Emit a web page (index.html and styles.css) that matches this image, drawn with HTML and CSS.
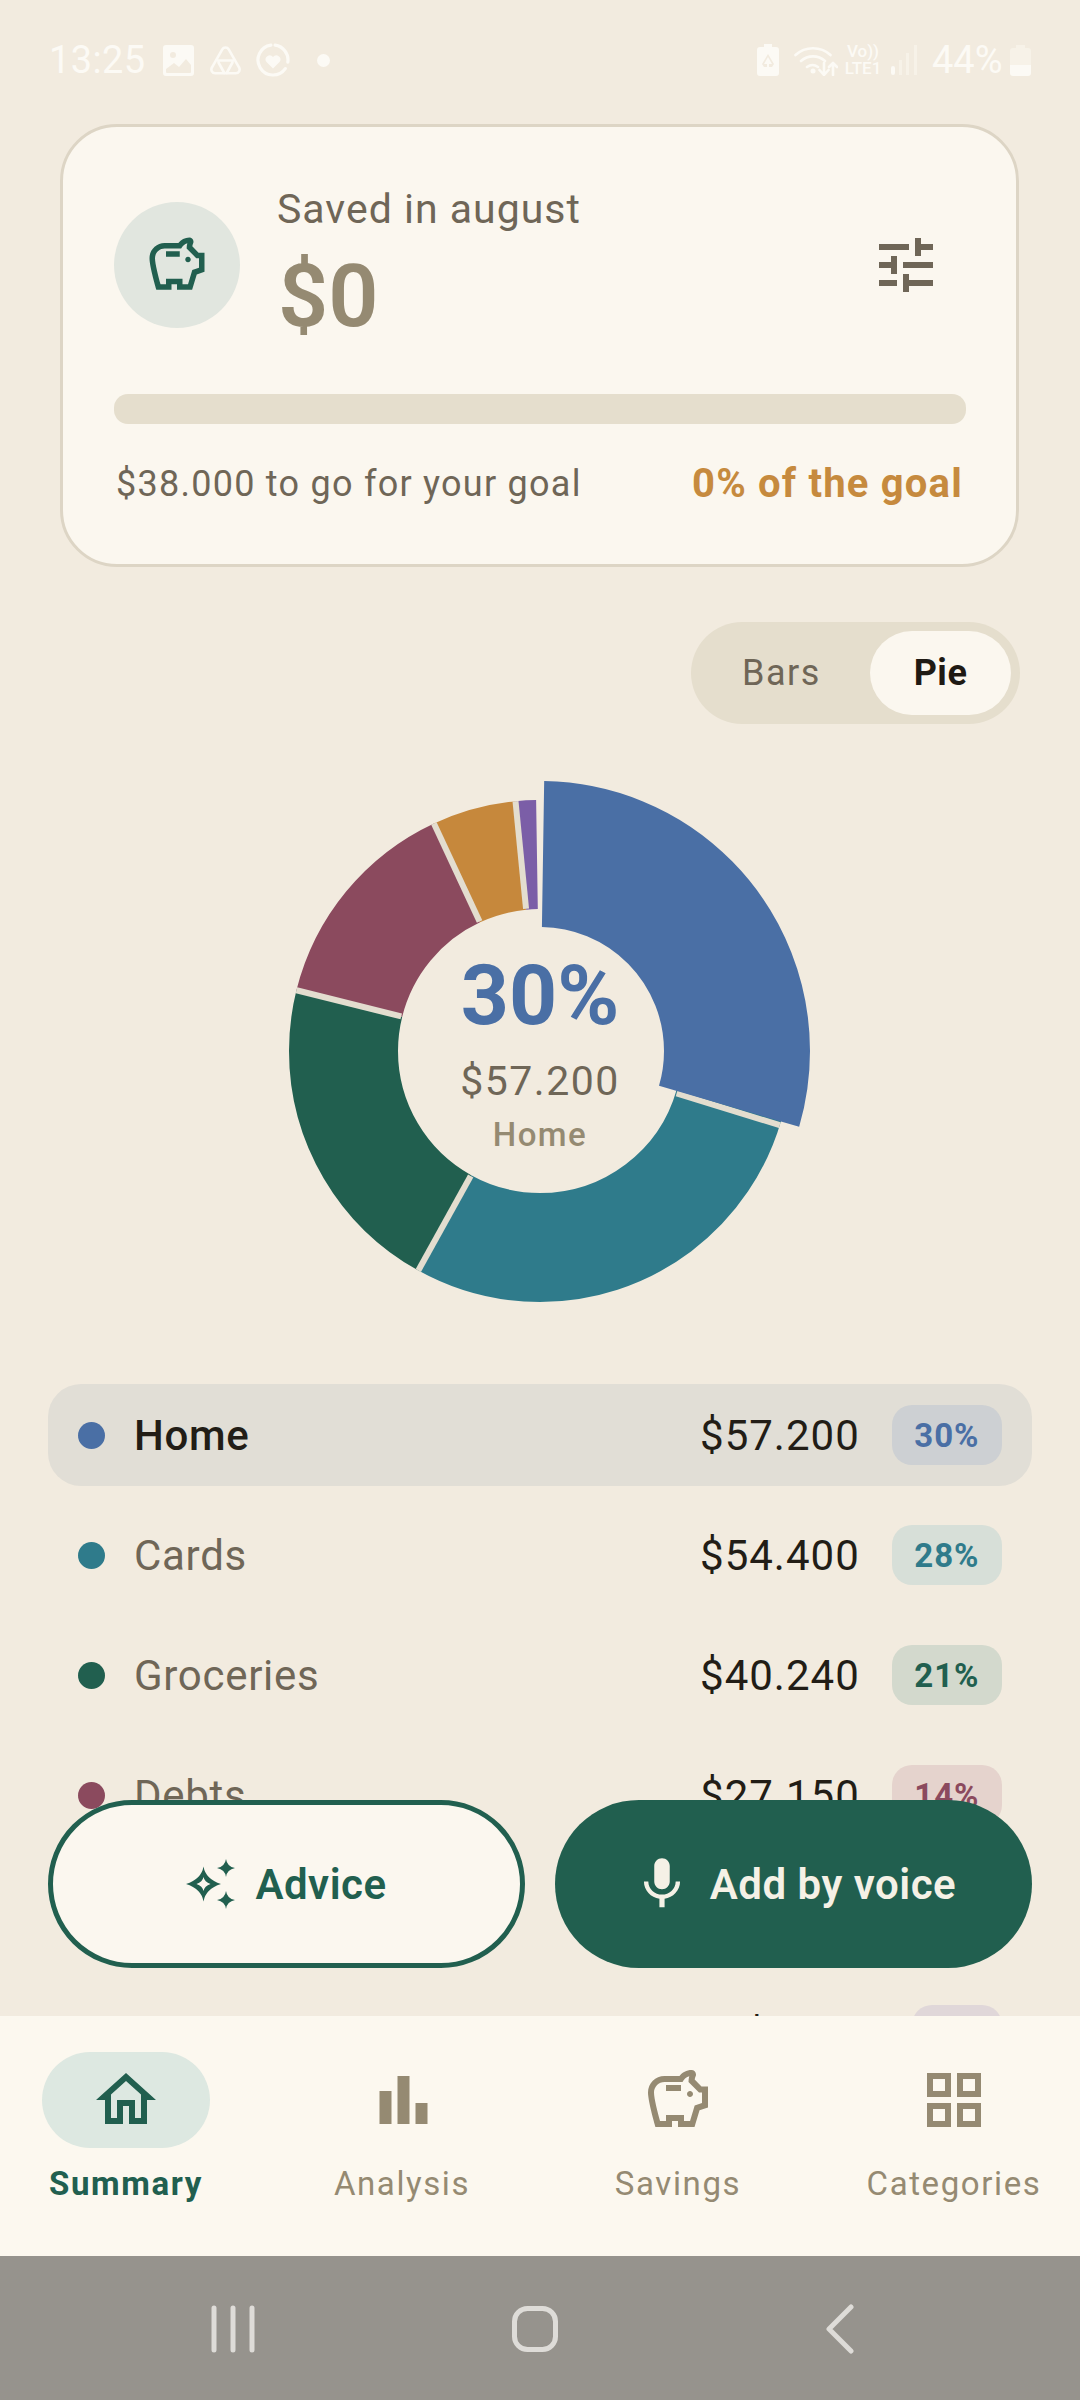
FILE: index.html
```html
<!DOCTYPE html>
<html lang="en">
<head>
<meta charset="utf-8">
<title>Summary</title>
<link rel="stylesheet" href="styles.css">
</head>
<body>
<div class="screen">
  <header class="status">
    <span class="status-time">13:25</span>
    <svg class="si si-img" viewBox="0 0 31 31"><path fill-rule="evenodd" d="M3 0h25a3 3 0 0 1 3 3v25a3 3 0 0 1-3 3H3a3 3 0 0 1-3-3V3a3 3 0 0 1 3-3zM10 7a3 3 0 1 0 0 6 3 3 0 0 0 0-6zM3 24v3a1 1 0 0 0 1 1h23a1 1 0 0 0 1-1v-7l-5-6-7 8-5-4z"/></svg>
    <svg class="si si-tri" viewBox="0 0 31 29"><g class="si-line"><path d="M12.300 3.300a3.700 3.700 0 0 1 6.400 0l10.300 18a3.900 3.900 0 0 1-3.300 6H5.300a3.900 3.900 0 0 1-3.300-6z"/><path d="M8 14.500h15M8.500 16.500l5.800 10.500M22.500 16.500L16.700 27"/></g></svg>
    <svg class="si si-ring" viewBox="0 0 34 34"><g class="si-line si-line-ring"><path d="M19.100 2.150A15 15 0 0 1 31.850 19.090M29.300 25.600A15 15 0 1 1 14.900 2.150"/></g><path d="M17 25.500l-6.500-6.500a4 4 0 0 1 6.500-5 4 4 0 0 1 6.500 5z"/></svg>
    <span class="status-dot"></span>
    <svg class="si si-save" viewBox="0 0 22 32"><path fill-rule="evenodd" d="M7 0h8v3h4a3 3 0 0 1 3 3v23a3 3 0 0 1-3 3H3a3 3 0 0 1-3-3V6a3 3 0 0 1 3-3h4zM11 10l-6 10 2 3h3v-3H7l4-7 4 7h-3v3h3l2-3z"/></svg>
    <svg class="si si-wifi" viewBox="0 0 44 32"><g class="si-line"><path d="M1.500 11a26 26 0 0 1 35 0M7 17a18 18 0 0 1 24 0M13 23a9.500 9.500 0 0 1 11 0"/><path d="M30 19v12M25.500 26l4.500 5 4.500-5M39 31V19M35 23l4-4 4 4"/></g><circle cx="19" cy="27" r="2.500"/></svg>
    <div class="volte"><span>Vo))</span><span>LTE1</span></div>
    <svg class="si si-signal" viewBox="0 0 27 30"><rect x="0" y="21" width="4" height="9" rx="2"/><rect class="faint" x="8" y="15" width="3" height="15"/><rect class="faint" x="15" y="8" width="3" height="22"/><rect class="faint" x="23" y="0" width="3" height="30"/></svg>
    <span class="status-pct">44%</span>
    <svg class="si si-batt" viewBox="0 0 21 31"><path class="faint" d="M6 0h9v3h3a3 3 0 0 1 3 3v14H0V6a3 3 0 0 1 3-3h3z"/><path d="M0 20h21v8a3 3 0 0 1-3 3H3a3 3 0 0 1-3-3z"/></svg>
  </header>

  <main class="content">
    <section class="card">
      <div class="card-head">
        <div class="card-avatar">
          <svg class="icon-pig" viewBox="0 0 24 24"><path d="M15 10c0-.55.45-1 1-1s1 .45 1 1-.45 1-1 1-1-.45-1-1zM8 9h5V7H8v2zm14-1.500v6.970l-2.820.94L17.500 21H12v-2h-2v2H4.500S2 12.540 2 9.500 4.460 4 7.500 4h5c.91-1.210 2.360-2 4-2 .83 0 1.500.67 1.500 1.500 0 .21-.04.4-.12.58-.14.32-.26.69-.32 1.090L19.830 7.500H22zm-2 2h-1l-3.500-3.500c0-.65.09-1.290.26-1.910-.97.25-1.760.97-2.260 1.910h-6C5.570 6 4 7.570 4 9.500c0 1.880 1.220 6.650 2.010 9.500H8v-2h6v2h2.010l1.550-5.150L20 13.030V9.500z"/></svg>
        </div>
        <div class="card-title">
          <div class="card-label">Saved in august</div>
          <div class="card-amount">$0</div>
        </div>
        <svg class="icon-tune" viewBox="0 0 24 24"><path d="M3 17v2h6v-2H3zM3 5v2h10V5H3zm10 16v-2h8v-2h-8v-2h-2v6h2zM7 9v2H3v2h4v2h2V9H7zm14 4v-2H11v2h10zm-6-4h2V7h4V5h-4V3h-2v6z"/></svg>
      </div>
      <div class="progress"></div>
      <div class="card-foot">
        <span class="foot-left">$38.000 to go for your goal</span>
        <span class="foot-right">0% of the goal</span>
      </div>
    </section>

    <div class="toggle">
      <span class="seg seg-bars">Bars</span>
      <span class="seg seg-pie">Pie</span>
    </div>

    <div class="donut">
      <svg class="donut-svg" viewBox="0 0 560 560">
        <g transform="rotate(-90 280 280)">
          <circle class="slice teal" cx="280" cy="280" r="196.500" pathLength="360" stroke-dasharray="103 360" stroke-dashoffset="-106"/>
          <circle class="slice green" cx="280" cy="280" r="196.500" pathLength="360" stroke-dasharray="75 360" stroke-dashoffset="-209"/>
          <circle class="slice maroon" cx="280" cy="280" r="196.500" pathLength="360" stroke-dasharray="51 360" stroke-dashoffset="-284"/>
          <circle class="slice orange" cx="280" cy="280" r="196.500" pathLength="360" stroke-dasharray="19.400 360" stroke-dashoffset="-335"/>
          <circle class="slice purple" cx="280" cy="280" r="196.500" pathLength="360" stroke-dasharray="4.700 360" stroke-dashoffset="-354.400"/>
        </g>
        <line class="gap" x1="280" y1="137" x2="280" y2="29" transform="rotate(107.200 280 280)"/>
        <line class="gap" x1="280" y1="137" x2="280" y2="29" transform="rotate(209 280 280)"/>
        <line class="gap" x1="280" y1="137" x2="280" y2="29" transform="rotate(284 280 280)"/>
        <line class="gap" x1="280" y1="137" x2="280" y2="29" transform="rotate(335 280 280)"/>
        <line class="gap" x1="280" y1="137" x2="280" y2="29" transform="rotate(354.400 280 280)"/>
        <g transform="rotate(-90 280 280)">
          <circle class="slice-active" cx="280" cy="280" r="197" pathLength="360" stroke-dasharray="105.400 360" stroke-dashoffset="-0.900"/>
        </g>
      </svg>
      <div class="donut-center">
        <div class="donut-pct">30%</div>
        <div class="donut-amt">$57.200</div>
        <div class="donut-name">Home</div>
      </div>
    </div>

    <ul class="legend">
      <li class="row row-active">
        <span class="dot bg-blue"></span><span class="name">Home</span><span class="amt">$57.200</span><span class="badge badge-blue">30%</span>
      </li>
      <li class="row">
        <span class="dot bg-teal"></span><span class="name">Cards</span><span class="amt">$54.400</span><span class="badge badge-teal">28%</span>
      </li>
      <li class="row">
        <span class="dot bg-green"></span><span class="name">Groceries</span><span class="amt">$40.240</span><span class="badge badge-green">21%</span>
      </li>
      <li class="row">
        <span class="dot bg-maroon"></span><span class="name">Debts</span><span class="amt">$27.150</span><span class="badge badge-maroon">14%</span>
      </li>
      <li class="row"></li>
      <li class="row">
        <span class="amt">$2.860</span><span class="badge badge-purple">2%</span>
      </li>
    </ul>

    <div class="actions">
      <button class="btn btn-outline">
        <svg class="icon-spark" viewBox="0 0 50 50"><path fill-rule="evenodd" d="M17.500 7.500Q19.500 20 35 25 19.500 30 17.500 42.500 15.500 30 0 25 15.500 20 17.500 7.500zM17.500 18Q16.500 23 10.500 25 16.500 27 17.500 32 18.500 27 24.500 25 18.500 23 17.500 18z"/><path d="M40 0Q41 7.500 49 9 41 10.500 40 18 39 10.500 31 9 39 7.500 40 0zM40 32Q41 39.500 49 41 41 42.500 40 50 39 42.500 31 41 39 39.500 40 32z"/></svg>
        <span>Advice</span>
      </button>
      <button class="btn btn-solid">
        <svg class="icon-mic" viewBox="0 0 24 24"><path d="M12 14c1.660 0 2.990-1.340 2.990-3L15 5c0-1.660-1.340-3-3-3S9 3.340 9 5v6c0 1.660 1.340 3 3 3zm5.300-3c0 3-2.540 5.100-5.300 5.100S6.700 14 6.700 11H5c0 3.410 2.720 6.230 6 6.720V21h2v-3.280c3.280-.48 6-3.300 6-6.720h-1.700z"/></svg>
        <span>Add by voice</span>
      </button>
    </div>
  </main>

  <nav class="tabs">
    <div class="tab tab-active">
      <div class="tab-icon"><svg viewBox="0 0 24 24"><path d="M12 5.690l5 4.500V18h-2v-6H9v6H7v-7.810l5-4.500M12 3L2 12h3v8h6v-6h2v6h6v-8h3L12 3z"/></svg></div>
      <span class="tab-label">Summary</span>
    </div>
    <div class="tab">
      <div class="tab-icon"><svg viewBox="0 0 24 24"><path d="M4.500 9h4v11h-4zM10.500 4h4v16h-4zM16.500 13h4v7h-4z"/></svg></div>
      <span class="tab-label">Analysis</span>
    </div>
    <div class="tab">
      <div class="tab-icon"><svg viewBox="0 0 24 24"><path d="M15 10c0-.55.45-1 1-1s1 .45 1 1-.45 1-1 1-1-.45-1-1zM8 9h5V7H8v2zm14-1.500v6.970l-2.820.94L17.500 21H12v-2h-2v2H4.500S2 12.540 2 9.500 4.460 4 7.500 4h5c.91-1.210 2.360-2 4-2 .83 0 1.500.67 1.500 1.500 0 .21-.04.4-.12.58-.14.32-.26.69-.32 1.090L19.830 7.500H22zm-2 2h-1l-3.500-3.500c0-.65.09-1.290.26-1.910-.97.25-1.760.97-2.260 1.910h-6C5.570 6 4 7.570 4 9.500c0 1.880 1.220 6.650 2.010 9.500H8v-2h6v2h2.010l1.550-5.150L20 13.030V9.500z"/></svg></div>
      <span class="tab-label">Savings</span>
    </div>
    <div class="tab">
      <div class="tab-icon"><svg viewBox="0 0 24 24"><path d="M3 3v8h8V3H3zm6 6H5V5h4v4zm-6 4v8h8v-8H3zm6 6H5v-4h4v4zm4-16v8h8V3h-8zm6 6h-4V5h4v4zm-6 4v8h8v-8h-8zm6 6h-4v-4h4v4z"/></svg></div>
      <span class="tab-label">Categories</span>
    </div>
  </nav>

  <footer class="sysnav">
    <svg class="sys sys-recent" viewBox="0 0 44 48"><path d="M3 3v42M22 3v42M41 3v42"/></svg>
    <svg class="sys sys-home" viewBox="0 0 46 46"><rect x="2.500" y="2.500" width="41" height="41" rx="13"/></svg>
    <svg class="sys sys-back" viewBox="0 0 28 50"><path d="M25 3L3 25l22 22"/></svg>
  </footer>
</div>
</body>
</html>
```

FILE: styles.css
```css
* { box-sizing: border-box; }

html, body {
  margin: 0;
  padding: 0;
}

body {
  width: 1080px;
  height: 2400px;
  overflow: hidden;
  font-family: Roboto, "Liberation Sans", sans-serif;
}

.screen {
  width: 1080px;
  height: 2400px;
  display: flex;
  flex-direction: column;
  background: #f2ebdf;
  color: #221d16;
}

/* status bar */
.status {
  height: 124px;
  flex: none;
  padding: 0 0 4px 49px;
  display: flex;
  align-items: center;
  color: #fcfaf5;
}

.status-time,
.status-pct {
  font-size: 38px;
  line-height: 44px;
}

.status-time { letter-spacing: 0.4px; }

.si {
  flex: none;
  fill: #fcfaf5;
}

.si-line {
  fill: none;
  stroke: #fcfaf5;
  stroke-width: 2.6;
  stroke-linecap: round;
  stroke-linejoin: round;
}

.si-line-ring { stroke-width: 3.2; }

.faint { fill: #f7f2e8; }

.si-img { width: 31px; height: 31px; margin-left: 17px; }
.si-tri { width: 31px; height: 29px; margin-left: 16px; }
.si-ring { width: 34px; height: 34px; margin-left: 15px; }

.status-dot {
  width: 13px;
  height: 13px;
  border-radius: 50%;
  background: #fcfaf5;
  margin-left: 27px;
  margin-right: auto;
}

.si-save { width: 22px; height: 32px; }
.si-wifi { width: 44px; height: 32px; margin-left: 15px; }

.volte {
  display: flex;
  flex-direction: column;
  align-items: center;
  margin-left: 6px;
  width: 38px;
  font-size: 17px;
  line-height: 17px;
  font-weight: 500;
}

.si-signal { width: 27px; height: 30px; margin-left: 9px; }
.status-pct { margin-left: 14px; width: 74px; }
.si-batt { width: 21px; height: 31px; margin-right: 49px; margin-left: 4px; }

/* content */
.content {
  flex: 1;
  min-height: 0;
  position: relative;
  overflow: hidden;
  display: flex;
  flex-direction: column;
}

.card {
  margin: 0 61px 0 60px;
  height: 443px;
  flex: none;
  border: 3px solid #ddd5c5;
  border-radius: 57px;
  background: #fbf7ef;
  padding: 48px 50px 0 51px;
}

.card-head {
  height: 180px;
  display: flex;
  align-items: center;
}

.card-avatar {
  width: 126px;
  height: 126px;
  border-radius: 50%;
  background: #e1e6df;
  display: flex;
  align-items: center;
  justify-content: center;
  flex: none;
}

.icon-pig { width: 66px; height: 66px; fill: #215f4f; }

.card-title {
  margin-left: 37px;
  flex: 1;
}

.card-label {
  font-size: 41px;
  line-height: 48px;
  letter-spacing: 1px;
  color: #6f6657;
}

.card-amount {
  margin-top: 13px;
  font-size: 88px;
  line-height: 100px;
  font-weight: 600;
  color: #958a72;
  padding-left: 1px;
}

.icon-tune {
  width: 72px;
  height: 72px;
  fill: #6f6657;
  margin-right: 24px;
  flex: none;
}

.progress {
  margin-top: 39px;
  height: 30px;
  border-radius: 14px;
  background: #e5decd;
}

.card-foot {
  margin-top: 38px;
  display: flex;
  justify-content: space-between;
  align-items: center;
  line-height: 44px;
  padding: 0 3px 0 2px;
}

.foot-left {
  font-size: 36px;
  letter-spacing: 1.25px;
  color: #6f6657;
}

.foot-right {
  font-size: 40px;
  font-weight: 700;
  letter-spacing: 1.2px;
  color: #c68a3e;
}

/* toggle */
.toggle {
  margin: 55px 60px 0 auto;
  width: 329px;
  height: 102px;
  flex: none;
  padding: 9px;
  border-radius: 51px;
  background: #e5decd;
  display: flex;
}

.seg {
  display: flex;
  align-items: center;
  justify-content: center;
  font-size: 36px;
  border-radius: 42px;
}

.seg-bars {
  width: 170px;
  color: #6f6657;
  letter-spacing: 1.5px;
  padding-right: 7px;
}

.seg-pie {
  width: 141px;
  background: #fbf7ef;
  color: #1f1a14;
  font-weight: 700;
  letter-spacing: 0.5px;
}

/* donut */
.donut {
  margin: 47px auto 0;
  width: 560px;
  height: 560px;
  flex: none;
  position: relative;
}

.donut-svg {
  display: block;
  width: 560px;
  height: 560px;
}

.slice {
  fill: none;
  stroke-width: 109;
}

.teal { stroke: #2f7b8b; }
.green { stroke: #215f4f; }
.maroon { stroke: #8b4a5e; }
.orange { stroke: #c6883c; }
.purple { stroke: #7b5ea7; }

.gap {
  stroke: #e3ddcf;
  stroke-width: 6;
}

.slice-active {
  fill: none;
  stroke: #4a6fa5;
  stroke-width: 146;
}

.donut-center {
  position: absolute;
  inset: 0;
  padding-top: 183px;
  display: flex;
  flex-direction: column;
  align-items: center;
}

.donut-pct {
  font-size: 84px;
  line-height: 84px;
  font-weight: 700;
  color: #4a6fa5;
}

.donut-amt {
  margin-top: 20px;
  font-size: 41px;
  line-height: 46px;
  letter-spacing: 1.5px;
  color: #6f6657;
}

.donut-name {
  margin-top: 12px;
  font-size: 33px;
  line-height: 38px;
  font-weight: 500;
  letter-spacing: 1.5px;
  color: #958a72;
}

/* legend */
.legend {
  list-style: none;
  margin: 53px 48px 0;
  padding: 0;
  display: flex;
  flex-direction: column;
  gap: 18px;
  flex: none;
}

.row {
  height: 102px;
  flex: none;
  padding: 0 30px;
  border-radius: 33px;
  display: flex;
  align-items: center;
}

.row-active { background: #e1ded6; }

.dot {
  width: 27px;
  height: 27px;
  border-radius: 50%;
  flex: none;
}

.bg-blue { background: #4a6fa5; }
.bg-teal { background: #2f7b8b; }
.bg-green { background: #215f4f; }
.bg-maroon { background: #8b4a5e; }

.name {
  margin-left: 29px;
  font-size: 42px;
  letter-spacing: 0.7px;
  color: #6f6657;
}

.row-active .name {
  font-weight: 500;
  color: #221d16;
}

.amt {
  margin-left: auto;
  font-size: 42px;
  letter-spacing: 1px;
  color: #221d16;
}

.badge {
  margin-left: 32px;
  height: 60px;
  padding: 0 22.500px;
  border-radius: 20px;
  display: flex;
  align-items: center;
  justify-content: center;
  font-size: 33px;
  font-weight: 700;
  letter-spacing: 1px;
  flex: none;
}

.badge-blue { background: #cdd0d3; color: #4a6fa5; }
.badge-teal { background: #d7dfd8; color: #2f7b8b; }
.badge-green { background: #d3d9cd; color: #215f4f; }
.badge-maroon { background: #e5d3cd; color: #8b4a5e; }
.badge-purple { background: #e0d7d9; color: #7b5ea7; }

/* floating actions */
.actions {
  position: absolute;
  left: 48px;
  right: 48px;
  bottom: 48px;
  display: grid;
  grid-template-columns: 1fr 1fr;
  gap: 30px;
}

.btn {
  height: 168px;
  border-radius: 84px;
  display: flex;
  align-items: center;
  justify-content: center;
  font-family: inherit;
  font-size: 42px;
  font-weight: 600;
  letter-spacing: 0.5px;
  padding: 0;
}

.btn-outline {
  background: #fbf7ef;
  border: 5px solid #215f4f;
  color: #215f4f;
}

.btn-solid {
  background: #215f4f;
  border: 0;
  color: #f5f1e6;
}

.icon-spark {
  width: 50px;
  height: 50px;
  fill: #215f4f;
  margin-right: 19px;
}

.icon-mic {
  width: 62px;
  height: 62px;
  fill: #f5f1e6;
  margin-right: 17px;
}

/* tab bar */
.tabs {
  height: 240px;
  flex: none;
  background: #fcf8ef;
  padding: 36px 42px 0;
  display: flex;
  justify-content: space-between;
  position: relative;
}

.tab {
  width: 168px;
  display: flex;
  flex-direction: column;
  align-items: center;
}

.tab-icon {
  width: 168px;
  height: 96px;
  border-radius: 48px;
  display: flex;
  align-items: center;
  justify-content: center;
  flex: none;
}

.tab-icon svg {
  width: 72px;
  height: 72px;
  fill: #958a72;
}

.tab-label {
  margin-top: 16px;
  font-size: 33px;
  line-height: 40px;
  letter-spacing: 1.6px;
  color: #958a72;
  white-space: nowrap;
}

.tab-active .tab-icon { background: #dde8e1; }
.tab-active .tab-icon svg { fill: #215f4f; }

.tab-active .tab-label {
  font-weight: 700;
  color: #215f4f;
}

/* system nav */
.sysnav {
  height: 144px;
  flex: none;
  background: #96938d;
  padding: 2px 226px 0 211px;
  display: flex;
  align-items: center;
  justify-content: space-between;
}

.sys {
  fill: none;
  stroke: #dedcd8;
  stroke-width: 5;
  stroke-linecap: round;
  stroke-linejoin: round;
}

.sys-recent { width: 44px; height: 48px; }
.sys-home { width: 46px; height: 46px; margin-right: 11px; }
.sys-back { width: 28px; height: 50px; }
```
